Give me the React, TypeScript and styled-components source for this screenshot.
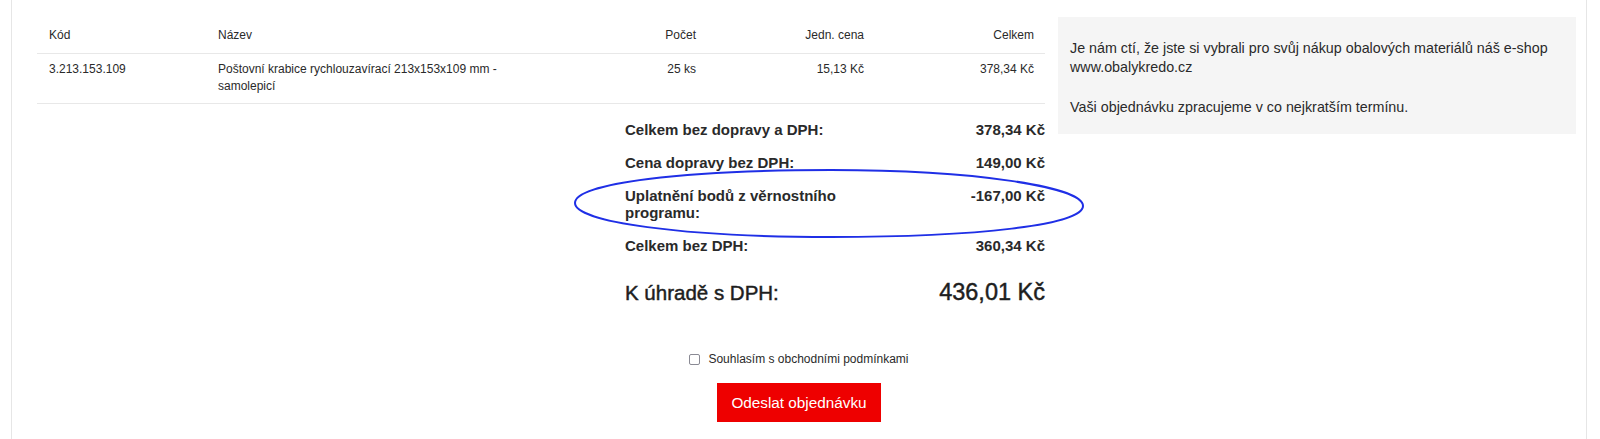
import React, { useState } from 'react'
import styled, { createGlobalStyle } from 'styled-components'

const GlobalStyle = createGlobalStyle`
  html, body {
    margin: 0;
    padding: 0;
    background: #fff;
    font-family: "Liberation Sans", Arial, sans-serif;
    color: #333;
  }
`

type Item = { code: string, name: string, count: string, unit: string, total: string }

const items: Item[] = [
  {
    code: '3.213.153.109',
    name: 'Poštovní krabice rychlouzavírací 213x153x109 mm - samolepicí',
    count: '25 ks',
    unit: '15,13 Kč',
    total: '378,34 Kč',
  },
]

const summary = [
  { label: 'Celkem bez dopravy a DPH:', value: '378,34 Kč' },
  { label: 'Cena dopravy bez DPH:', value: '149,00 Kč' },
  { label: 'Uplatnění bodů z věrnostního programu:', value: '-167,00 Kč', marked: true },
  { label: 'Celkem bez DPH:', value: '360,34 Kč' },
]

const Page = styled.div`
  margin: 0 13px 0 11px;
  min-height: 439px;
  border-left: 1px solid #e6e6e6;
  border-right: 1px solid #e6e6e6;
  box-sizing: border-box;
`

const Top = styled.div`
  display: flex;
  align-items: flex-start;
  padding: 17px 10px 0 25px;
  gap: 13px;
`

const Main = styled.section`
  width: 1008px;
  flex-shrink: 0;
`

const Table = styled.table`
  width: 100%;
  table-layout: fixed;
  border-collapse: collapse;
  font-size: 12px;
  line-height: 17px;
  color: #2a2a2a;
`

const Th = styled.th<{ $align?: string, $width?: number }>`
  box-sizing: border-box;
  font-weight: normal;
  text-align: ${p => p.$align || 'left'};
  width: ${p => (p.$width ? `${p.$width}px` : 'auto')};
  padding: 10px 11px 9px 12px;
  border-bottom: 1px solid #e8e8e8;
`

const Td = styled.td<{ $align?: string }>`
  text-align: ${p => p.$align || 'left'};
  vertical-align: top;
  padding: 7px 11px 8px 12px;
  border-bottom: 1px solid #e8e8e8;
`

const NameText = styled.div`
  max-width: 290px;
`

const Summary = styled.div`
  margin: 9px 0 0 588px;
`

const SumRow = styled.div<{ $big?: boolean }>`
  display: flex;
  justify-content: space-between;
  align-items: ${p => (p.$big ? 'baseline' : 'flex-start')};
  position: relative;
  padding: 8px 0;
  font-size: ${p => (p.$big ? '20.5px' : '15px')};
  line-height: ${p => (p.$big ? '24px' : '17px')};
  font-weight: ${p => (p.$big ? 'normal' : 'bold')};
  margin-top: ${p => (p.$big ? '10px' : '0')};
  color: ${p => (p.$big ? '#1e1e1e' : '#2a2a2a')};
  -webkit-text-stroke: ${p => (p.$big ? '0.45px #1e1e1e' : '0')};
`

const SumLabel = styled.span`
  width: 240px;
`

const SumValue = styled.span<{ $big?: boolean }>`
  text-align: right;
  font-size: ${p => (p.$big ? '23.5px' : 'inherit')};
`

const Mark = styled.svg`
  position: absolute;
  left: -52px;
  top: -12px;
  width: 512px;
  height: 72px;
  pointer-events: none;
  overflow: visible;
`

const Aside = styled.aside`
  width: 494px;
  background: #f5f5f5;
  padding: 22px 12px 18px;
  font-size: 14.3px;
  line-height: 18.5px;
  color: #2a2a2a;

  p {
    margin: 0 0 21.5px;
  }
  p:last-child {
    margin: 0;
  }
`

const Footer = styled.div`
  display: flex;
  flex-direction: column;
  align-items: center;
  padding-top: 39px;
`

const Agree = styled.label`
  display: flex;
  align-items: center;
  gap: 8px;
  font-size: 12px;
  line-height: 14px;
  color: #2a2a2a;
  cursor: pointer;
`

const Box = styled.span<{ $checked: boolean }>`
  width: 9px;
  height: 9px;
  border: 1.5px solid #8a8a94;
  border-radius: 2px;
  background: ${p => (p.$checked ? '#8a8a94' : '#fff')};
`

const HiddenInput = styled.input`
  display: none;
`

const SubmitButton = styled.button`
  margin-top: 17px;
  width: 164px;
  height: 39px;
  border: none;
  background: #ee0000;
  color: #fff;
  font-family: "Liberation Sans", Arial, sans-serif;
  font-size: 15.3px;
  cursor: pointer;
`

export default function App() {
  const [agree, setAgree] = useState(false)

  return (
    <>
      <GlobalStyle />
      <Page>
        <Top>
          <Main>
            <Table>
              <thead>
                <tr>
                  <Th $width={169}>Kód</Th>
                  <Th>Název</Th>
                  <Th $align="right" $width={120}>Počet</Th>
                  <Th $align="right" $width={168}>Jedn. cena</Th>
                  <Th $align="right" $width={170}>Celkem</Th>
                </tr>
              </thead>
              <tbody>
                {items.map(it => (
                  <tr key={it.code}>
                    <Td>{it.code}</Td>
                    <Td><NameText>{it.name}</NameText></Td>
                    <Td $align="right">{it.count}</Td>
                    <Td $align="right">{it.unit}</Td>
                    <Td $align="right">{it.total}</Td>
                  </tr>
                ))}
              </tbody>
            </Table>

            <Summary>
              {summary.map(s => (
                <SumRow key={s.label}>
                  {s.marked && (
                    <Mark viewBox="0 0 512 72">
                      <path
                        d="M2 36 C 2 16, 112 3, 258 3 C 402 3, 510 20, 510 39 C 510 58, 404 70, 258 70 C 110 70, 2 55, 2 36 Z"
                        fill="none"
                        stroke="#1f2fe6"
                        strokeWidth="2"
                      />
                    </Mark>
                  )}
                  <SumLabel>{s.label}</SumLabel>
                  <SumValue>{s.value}</SumValue>
                </SumRow>
              ))}
              <SumRow $big>
                <SumLabel>K úhradě s DPH:</SumLabel>
                <SumValue $big>436,01 Kč</SumValue>
              </SumRow>
            </Summary>
          </Main>

          <Aside>
            <p>Je nám ctí, že jste si vybrali pro svůj nákup obalových materiálů náš e-shop www.obalykredo.cz</p>
            <p>Vaši objednávku zpracujeme v co nejkratším termínu.</p>
          </Aside>
        </Top>

        <Footer>
          <Agree>
            <HiddenInput type="checkbox" checked={agree} onChange={e => setAgree(e.target.checked)} />
            <Box $checked={agree} />
            Souhlasím s obchodními podmínkami
          </Agree>
          <SubmitButton type="button">Odeslat objednávku</SubmitButton>
        </Footer>
      </Page>
    </>
  )
}
